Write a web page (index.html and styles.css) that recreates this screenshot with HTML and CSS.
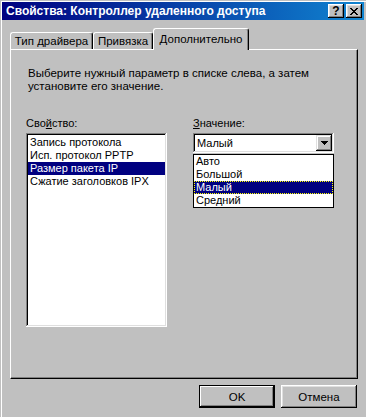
FILE: index.html
```html
<!DOCTYPE html>
<html lang="ru">
<head>
    <meta charset="UTF-8">
    <title>Свойства: Контроллер удаленного доступа</title>
    <link rel="stylesheet" href="styles.css">
</head>
<body>
    <div class="window">
        <div class="titlebar">
            <span class="title">Свойства: Контроллер удаленного доступа</span>
            <div class="title-buttons">
                <div class="tbtn help">?</div>
                <div class="tbtn close">
                    <svg width="8" height="7" viewBox="0 0 8 7">
                        <path d="M0 0h2v1h1v1h2v-1h1v-1h2v1h-1v1h-1v1h-1v1h1v1h1v1h1v1h-2v-1h-1v-1h-2v1h-1v1h-2v-1h1v-1h1v-1h1v-1h-1v-1h-1v-1h-1z" fill="#000"/>
                    </svg>
                </div>
            </div>
        </div>

        <div class="dialog-body">
            <div class="tabs">
                <div class="tab tab-driver">Тип драйвера</div>
                <div class="tab tab-binding">Привязка</div>
                <div class="tab tab-extra active">Дополнительно</div>
            </div>

            <div class="panel">
                <p class="hint">Выберите нужный параметр в списке слева, а затем<br>установите его значение.</p>

                <div class="columns">
                    <div class="col">
                        <div class="label">Сво<u>й</u>ство:</div>
                        <div class="listbox">
                            <div class="item">Запись протокола</div>
                            <div class="item">Исп. протокол PPTP</div>
                            <div class="item selected">Размер пакета IP</div>
                            <div class="item">Сжатие заголовков IPX</div>
                        </div>
                    </div>
                    <div class="col">
                        <div class="label"><u>З</u>начение:</div>
                        <div class="combo">
                            <span class="combo-value">Малый</span>
                            <div class="combo-btn">
                                <svg width="7" height="4" viewBox="0 0 7 4"><path d="M0 0h7v1h-1v1h-1v1h-1v1h-1v-1h-1v-1h-1v-1h-1z" fill="#000"/></svg>
                            </div>
                        </div>
                        <div class="dropdown">
                            <div class="item">Авто</div>
                            <div class="item">Большой</div>
                            <div class="item selected focus">Малый</div>
                            <div class="item">Средний</div>
                        </div>
                    </div>
                </div>
            </div>

            <div class="actions">
                <div class="button default">OK</div>
                <div class="button">Отмена</div>
            </div>
        </div>
    </div>
</body>
</html>
```

FILE: styles.css
```css
body {
    margin: 0;
    background: #c0c0c0;
    font-family: "Liberation Sans", Arial, sans-serif;
    font-size: 11px;
    color: #000;
}

.window {
    width: 366px;
    height: 417px;
    box-sizing: border-box;
    padding: 2px 2px 0 2px;
    background: #c0c0c0;
    box-shadow: inset 1px 1px 0 #c0c0c0, inset 2px 2px 0 #fff;
}

.titlebar {
    height: 18px;
    display: flex;
    align-items: center;
    justify-content: space-between;
    padding: 0 2px 0 4px;
    background: linear-gradient(to right, #000080, #1084d0);
}
.title {
    color: #fff;
    font-weight: bold;
    font-size: 12px;
    white-space: nowrap;
}
.title-buttons {
    display: flex;
    gap: 2px;
}
.tbtn {
    width: 16px;
    height: 14px;
    box-sizing: border-box;
    background: #c0c0c0;
    display: flex;
    align-items: center;
    justify-content: center;
    box-shadow: inset -1px -1px 0 #000, inset 1px 1px 0 #fff, inset -2px -2px 0 #808080, inset 2px 2px 0 #dfdfdf;
}
.tbtn.help {
    font-weight: bold;
    font-size: 12px;
    line-height: 14px;
}

.dialog-body {
    padding: 0 8px;
}

.tabs {
    display: flex;
    align-items: flex-end;
    height: 21px;
    margin-top: 8px;
    position: relative;
    z-index: 1;
}
.tab {
    height: 17px;
    box-sizing: border-box;
    text-align: center;
    line-height: 16px;
    font-size: 11.5px;
    white-space: nowrap;
    border-top: 1px solid #fff;
    border-left: 1px solid #fff;
    border-right: 1px solid #000;
    border-radius: 3px 3px 0 0;
    box-shadow: inset -1px 0 0 #808080;
    background: #c0c0c0;
}
.tab-driver { width: 83px; }
.tab-binding { width: 60px; }
.tab-extra { width: 96px; }
.tab.active {
    height: 22px;
    margin-bottom: -1px;
    line-height: 20px;
}

.panel {
    width: 348px;
    height: 330px;
    box-sizing: border-box;
    border-top: 1px solid #fff;
    border-left: 1px solid #fff;
    border-right: 1px solid #000;
    border-bottom: 1px solid #000;
    box-shadow: inset -1px -1px 0 #808080;
    padding: 17px 0 0 15px;
}

.hint {
    margin: 0;
    padding-left: 2px;
    line-height: 13px;
    font-size: 11.5px;
}

.columns {
    display: flex;
    gap: 26px;
    margin-top: 24px;
}
.col {
    width: 141px;
}
.label {
    line-height: 13px;
    margin-bottom: 3px;
}
.label u {
    text-decoration-thickness: 1px;
    text-underline-offset: 1px;
}

.listbox {
    height: 194px;
    box-sizing: border-box;
    background: #fff;
    padding: 3px 2px 2px;
    box-shadow: inset -1px -1px 0 #fff, inset 1px 1px 0 #808080, inset -2px -2px 0 #dfdfdf, inset 2px 2px 0 #000;
}
.item {
    line-height: 13px;
    height: 13px;
    padding-left: 2px;
    white-space: nowrap;
}
.item.selected {
    background: #000080;
    color: #fff;
}

.combo {
    height: 20px;
    box-sizing: border-box;
    background: #fff;
    display: flex;
    align-items: center;
    justify-content: space-between;
    padding: 2px;
    box-shadow: inset -1px -1px 0 #fff, inset 1px 1px 0 #808080, inset -2px -2px 0 #dfdfdf, inset 2px 2px 0 #000;
}
.combo-value {
    padding-left: 2px;
}
.combo-btn {
    width: 16px;
    height: 16px;
    box-sizing: border-box;
    background: #c0c0c0;
    display: flex;
    align-items: center;
    justify-content: center;
    box-shadow: inset -1px -1px 0 #000, inset 1px 1px 0 #dfdfdf, inset -2px -2px 0 #808080, inset 2px 2px 0 #fff;
}

.dropdown {
    margin-top: 1px;
    border: 1px solid #000;
    background: #fff;
}
.dropdown .item.focus {
    outline: 1px dotted #ff0;
    outline-offset: -1px;
}

.actions {
    display: flex;
    justify-content: flex-end;
    gap: 6px;
    margin-top: 6px;
    margin-right: -1px;
}
.button {
    width: 76px;
    height: 23px;
    box-sizing: border-box;
    display: flex;
    align-items: center;
    justify-content: center;
    font-size: 11.5px;
    background: #c0c0c0;
    box-shadow: inset -1px -1px 0 #000, inset 1px 1px 0 #fff, inset -2px -2px 0 #808080, inset 2px 2px 0 #dfdfdf;
}
.button.default {
    border: 1px solid #000;
    box-shadow: inset -1px -1px 0 #000, inset 1px 1px 0 #fff, inset -2px -2px 0 #808080;
}
```
